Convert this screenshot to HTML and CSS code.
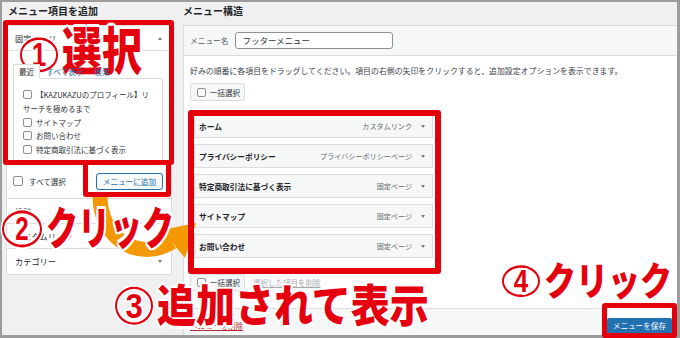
FILE: index.html
```html
<!DOCTYPE html>
<html lang="ja">
<head>
<meta charset="utf-8">
<title>メニュー</title>
<link rel="stylesheet" href="styles.css">
</head>
<body>
<div class="page">
  <div class="frame">
    <section class="col-left">
      <h2 class="col-title">メニュー項目を追加</h2>
      <div class="acc">
        <div class="acc-sec">
          <div class="acc-head">固定ページ<span class="caret up"></span></div>
          <div class="acc-body">
            <div class="tabs">
              <span class="tab active">最近</span>
              <span class="tab link">すべて表示</span>
              <span class="tab link">検索</span>
            </div>
            <div class="tab-panel">
              <ul class="checklist">
                <li><span class="cb"></span>【KAZUKAZUのプロフィール】リサーチを極めるまで</li>
                <li><span class="cb"></span>サイトマップ</li>
                <li><span class="cb"></span>お問い合わせ</li>
                <li><span class="cb"></span>特定商取引法に基づく表示</li>
              </ul>
            </div>
            <div class="submit-row">
              <span class="sel-all"><span class="cb big"></span>すべて選択</span>
              <span class="btn-add">メニューに追加</span>
            </div>
          </div>
        </div>
        <div class="acc-head">投稿</div>
        <div class="acc-head">カスタムリンク</div>
        <div class="acc-head last">カテゴリー<span class="caret down"></span></div>
      </div>
    </section>
    <section class="col-right">
      <h2 class="col-title">メニュー構造</h2>
      <div class="mbox">
        <div class="mbox-head">
          <span class="name-label">メニュー名</span>
          <span class="name-input">フッターメニュー</span>
        </div>
        <div class="mbox-body">
          <p class="hint">好みの順番に各項目をドラッグしてください。項目の右側の矢印をクリックすると、追加設定オプションを表示できます。</p>
          <div class="bulk-row first"><span class="bulk"><span class="cb"></span>一括選択</span></div>
          <ul class="items">
            <li class="item"><span class="item-title">ホーム</span><span class="item-type">カスタムリンク</span><span class="caret down"></span></li>
            <li class="item"><span class="item-title">プライバシーポリシー</span><span class="item-type">プライバシーポリシーページ</span><span class="caret down"></span></li>
            <li class="item"><span class="item-title">特定商取引法に基づく表示</span><span class="item-type">固定ページ</span><span class="caret down"></span></li>
            <li class="item"><span class="item-title">サイトマップ</span><span class="item-type">固定ページ</span><span class="caret down"></span></li>
            <li class="item"><span class="item-title">お問い合わせ</span><span class="item-type">固定ページ</span><span class="caret down"></span></li>
          </ul>
          <div class="bulk-row second"><span class="bulk"><span class="cb"></span>一括選択</span><span class="del-sel">選択した項目を削除</span></div>
        </div>
        <div class="mbox-foot">
          <span class="del-menu">メニューを削除</span>
          <span class="btn-save">メニューを保存</span>
        </div>
      </div>
    </section>
  </div>

  <svg class="arrow" width="680" height="338" viewBox="0 0 680 338">
    <path d="M100,196 C100,240 140,262 172,242" fill="none" stroke="#f39800" stroke-width="15"/>
    <polygon points="162,230 185,258 196,223" fill="#f39800"/>
  </svg>

  <div class="rbox rb1"></div>
  <div class="rbox rb2"></div>
  <div class="rbox rb3"></div>
  <div class="rbox rb4"></div>

  <div class="note n1"><span class="circ">1</span><span>選択</span></div>
  <div class="note n2"><span class="circ">2</span><span>クリック</span></div>
  <div class="note n3"><span class="circ">3</span><span>追加されて表示</span></div>
  <div class="note n4"><span class="circ">4</span><span>クリック</span></div>
</div>
</body>
</html>
```
FILE: styles.css
```css
* { box-sizing: border-box; margin: 0; padding: 0; }
body { margin: 0; background: #fff; font-family: "Noto Sans CJK JP", "Noto Sans", sans-serif; color: #1d2327; }
ul { list-style: none; }

.page { position: relative; width: 680px; height: 338px; overflow: hidden; }
.frame {
  width: 680px; height: 338px;
  border-style: solid; border-color: #9c9c9c; border-width: 2px 3px 3px 2px;
  background: #f0f0f1;
  display: flex; padding-left: 4px;
}
.col-left { width: 166px; flex: none; display: flex; flex-direction: column; }
.col-right { flex: 1; min-width: 0; margin-left: 11px; display: flex; flex-direction: column; }
.col-title { font-size: 10px; font-weight: 700; line-height: 17px; height: 23px; color: #1d2327; padding-left: 2px; }
.col-right .col-title { padding-left: 0; }

/* checkbox */
.cb {
  display: inline-block; width: 9px; height: 9px;
  border: 1px solid #8c8f94; border-radius: 2px; background: #fff;
  vertical-align: -1px; margin-right: 4px;
}
.cb.big { width: 10px; height: 10px; margin-right: 6px; }

.caret { display: inline-block; width: 0; height: 0; border-left: 2.5px solid transparent; border-right: 2.5px solid transparent; }
.caret.up { border-bottom: 3.5px solid #787c82; }
.caret.down { border-top: 3.5px solid #787c82; }

/* left accordion */
.acc { background: #fff; border: 1px solid #dcdcde; }
.acc-head {
  height: 25px; border-bottom: 1px solid #dcdcde;
  display: flex; align-items: center; justify-content: space-between;
  padding: 0 9px 0 8px; font-size: 8.2px; color: #1d2327;
}
.acc-head.last { border-bottom: none; }
.acc-sec { border-bottom: 1px solid #dcdcde; }
.acc-body { padding: 13px 8px 0 6px; }
.tabs { display: flex; height: 15px; align-items: stretch; font-size: 7.6px; position: relative; z-index: 1; margin-bottom: -1px; }
.tab { display: flex; align-items: center; padding: 0 5px; }
.tab.active { border: 1px solid #dcdcde; border-bottom-color: #fff; background: #fff; padding: 0 5px; color: #1d2327; }
.tab.link { color: #2271b1; padding: 0 0 0 6px; margin-right: 5px; }
.tab-panel { border: 1px solid #dcdcde; padding: 9px 8px 7px 9px; }
.checklist { font-size: 7.5px; line-height: 13.75px; color: #2c3338; }
.submit-row { height: 33px; display: flex; align-items: center; justify-content: space-between; font-size: 7.5px; color: #2c3338; }
.sel-all { display: flex; align-items: center; }
.btn-add {
  height: 17px; padding: 0 6px; border: 1px solid #2271b1; border-radius: 3px;
  background: #f6f7f7; color: #2271b1; font-size: 7.6px; line-height: 15px;
}

/* right menu box */
.mbox { flex: 1; display: flex; flex-direction: column; background: #fff; border: 1px solid #dcdcde; border-right: none; border-bottom: none; }
.mbox-head {
  height: 30px; flex: none; background: #f6f7f7; border-bottom: 1px solid #dcdcde;
  display: flex; align-items: center; padding-left: 6px;
}
.name-label { font-size: 7.7px; color: #50575e; }
.name-input {
  margin-left: 7px; width: 158px; height: 17px; border: 1px solid #8c8f94; border-radius: 3px;
  background: #fff; padding-left: 6px; font-size: 8.5px; line-height: 15px; color: #2c3338;
}
.mbox-body { flex: 1; padding: 9px 0 0 6px; }
.hint { font-size: 7.9px; line-height: 12px; color: #3c434a; }
.bulk-row { display: flex; align-items: center; }
.bulk-row.first { margin-top: 6px; }
.bulk-row.second { margin-top: 16px; }
.bulk {
  display: inline-flex; align-items: center; height: 18px; padding: 0 4px 0 6px;
  border: 1px solid #dcdcde; border-radius: 2px; background: #f6f7f7;
  font-size: 7.5px; color: #2c3338;
}
.bulk .cb { margin-right: 4px; }
.bulk-row.second .bulk { height: 17px; }
.del-sel { margin-left: 8px; font-size: 7.5px; color: #a7aaad; text-decoration: underline; }
.items { margin: 13px 0 0 4px; width: 239px; }
.item {
  height: 24px; margin-bottom: 6px; background: #f6f7f7; border: 1px solid #dcdcde;
  display: flex; align-items: center; padding: 0 7px 0 4px;
}
.item:last-child { margin-bottom: 0; }
.item-title { font-size: 7.7px; font-weight: 700; color: #1d2327; flex: 1; }
.item-type { font-size: 7.1px; color: #646970; margin-right: 9px; }
.mbox-foot {
  height: 27px; flex: none; background: #f6f7f7; border-top: 1px solid #dcdcde;
  display: flex; align-items: center; justify-content: space-between; padding: 7px 5px 0 6px;
}
.del-menu { font-size: 7.6px; color: #b32d2e; text-decoration: underline; }
.btn-save {
  height: 16px; padding: 0 6px; background: #2271b1; border-radius: 2px;
  color: #fff; font-size: 7.6px; line-height: 16px;
}

/* overlays */
.arrow { position: absolute; left: 0; top: 0; }
.rbox { position: absolute; border: 5px solid #e3000b; border-radius: 3px; }
.rb1 { left: 3px; top: 20px; width: 171px; height: 145px; }
.rb2 { left: 83px; top: 160px; width: 88px; height: 37px; }
.rb3 { left: 188px; top: 110px; width: 253px; height: 164px; border-width: 6px; }
.rb4 { left: 602px; top: 303px; width: 75px; height: 35px; }
.rb4::before { content: ""; position: absolute; left: 0; right: 0; top: 0; height: 9px; background: #fff; }

.note {
  position: absolute; white-space: nowrap; line-height: 1;
  display: flex; align-items: flex-start;
  font-family: "Noto Sans CJK JP", sans-serif; font-weight: 900; color: #e5000f;
  transform-origin: 0 0;
  text-shadow: 2px 0 #fff, -2px 0 #fff, 0 2px #fff, 0 -2px #fff,
    1.5px 1.5px #fff, -1.5px -1.5px #fff, 1.5px -1.5px #fff, -1.5px 1.5px #fff;
}
.circ {
  flex: none; display: flex; align-items: center; justify-content: center;
  border: 2.5px solid #e5000f; border-radius: 50%;
  box-shadow: 0 0 0 1.5px #fff, inset 0 0 0 1.5px #fff;
  font-family: "Liberation Sans", "Noto Sans", sans-serif; font-weight: 700; line-height: 1;
}
.n1 { left: 18px; top: 22px; font-size: 40px; transform: scaleY(1.29); }
.n1 .circ { width: 38px; height: 26.5px; margin: 12px 4px 0 2px; font-size: 26px; }
.n2 { left: 0; top: 202px; font-size: 32px; transform: scaleY(1.42); }
.n2 .circ { width: 40px; height: 26px; margin: 5.5px 4px 0 2px; font-size: 24px; }
.n3 { left: 113px; top: 281px; font-size: 39px; transform: scaleY(1.15); }
.n3 .circ { width: 38px; height: 33px; margin: 5px 4px 0 2px; font-size: 31px; }
.n4 { left: 500px; top: 258px; font-size: 32px; transform: scaleY(1.22); }
.n4 .circ { width: 38px; height: 26px; margin: 5.5px 4px 0 2px; font-size: 26px; }
```
